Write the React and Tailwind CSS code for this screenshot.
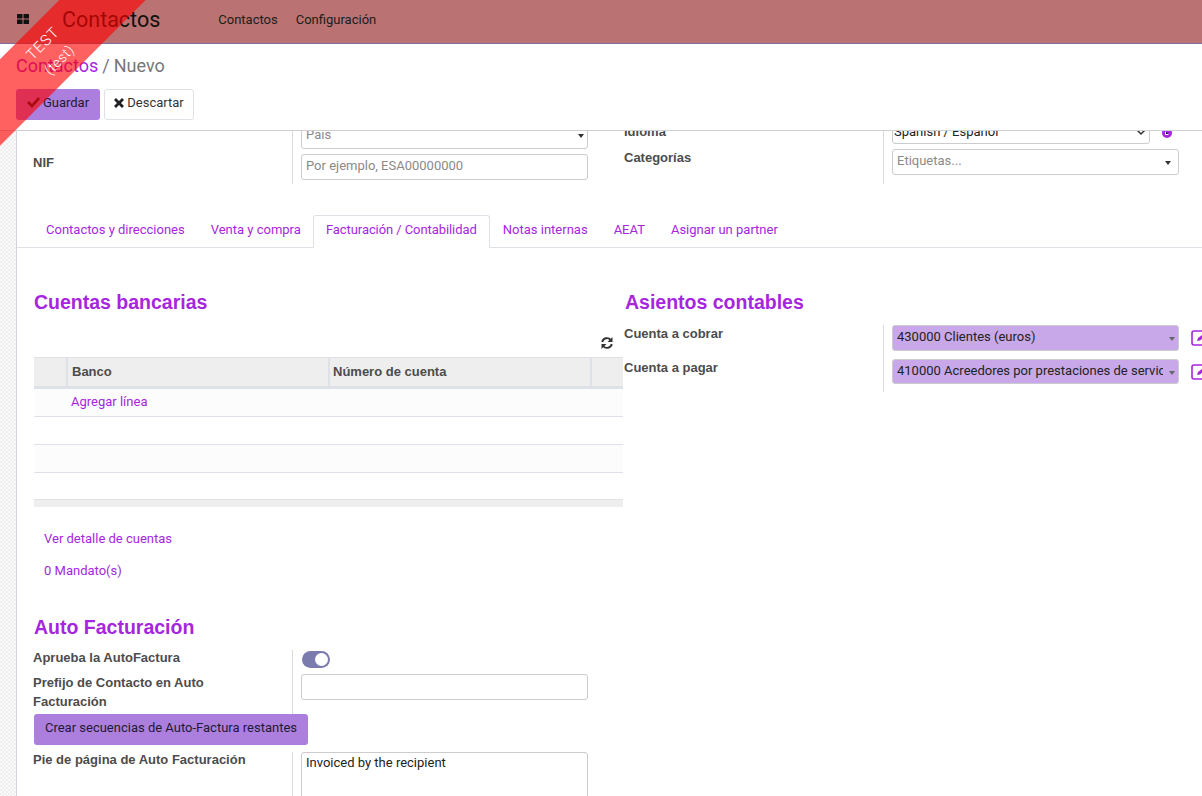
const purple = "text-[#a626e0]";
const bold = "font-['Liberation_Sans',sans-serif] font-bold";

const Caret = ({ className = "right-[7px] border-t-[#333]" }) => (
    <span className={`absolute top-1/2 -mt-[1px] w-0 h-0 border-x-[3px] border-x-transparent border-t-[4px] ${className}`}/>
);

const Label = ({ children, className = "" }) => (
    <div className={`text-[13px] leading-[19px] text-[#4c4c4c] ${bold} ${className}`}>{children}</div>
);

const Edit = () => (
    <svg className="ml-[12px] shrink-0" width="16" height="16" viewBox="0 0 16 16" fill="none">
        <path d="M16 1H3a2 2 0 0 0-2 2v10a2 2 0 0 0 2 2h13" stroke="#a626e0" strokeWidth="1.600"/>
        <path d="M6 11l1-3 4-3 2 2-4 3.500z" fill="#a626e0"/>
    </svg>
);

const App = () => (
    <div className="relative h-[796px] w-[1202px] overflow-hidden bg-white font-['Roboto',sans-serif] text-[13px] text-[#333]">
        <nav className="h-[44px] bg-[#ba7272] border-b border-[#7c6f9f] flex items-center text-[#1c1c1c]">
            <svg className="ml-[17px] mb-[5px]" width="12" height="10" viewBox="0 0 12 10" fill="#111">
                <rect width="5.500" height="4.500" rx="0.500"/>
                <rect x="6.500" width="5.500" height="4.500" rx="0.500"/>
                <rect y="5.500" width="5.500" height="4.500" rx="0.500"/>
                <rect x="6.500" y="5.500" width="5.500" height="4.500" rx="0.500"/>
            </svg>
            <span className="ml-[33px] text-[21.500px] text-[#111] pb-[3px]">Contactos</span>
            <span className="ml-[58px] pb-[4px]">Contactos</span>
            <span className="ml-[18px] pb-[4px]">Configuración</span>
        </nav>
        <header className="h-[87px] px-[16px] border-b border-[#cfcfcf] bg-white">
            <div className="pt-[10px] text-[18px] leading-[24px] text-[#777]">
                <span className={purple}>Contactos</span><span className="mx-[4px]">/</span>Nuevo
            </div>
            <div className="flex gap-[4px] mt-[11px]">
                <button className="h-[31px] w-[84px] pb-[4px] bg-[#ac7fde] rounded-[3px] flex items-center justify-center gap-[3px] text-[#221a33]">
                    <svg width="13" height="11" viewBox="0 0 13 11" fill="#222"><path d="M0 6l2-2 3 3 6-7 2 2-8 9z"/></svg>
                    Guardar
                </button>
                <button className="h-[31px] w-[90px] pb-[4px] bg-white border border-[#dee2e6] rounded-[3px] flex items-center justify-center gap-[3px] text-[#333]">
                    <svg width="10" height="10" viewBox="0 0 10 10" fill="#222"><path d="M0 2l2-2 3 3 3-3 2 2-3 3 3 3-2 2-3-3-3 3-2-2 3-3z"/></svg>
                    Descartar
                </button>
            </div>
        </header>
        <div className="flex h-[665px] overflow-hidden">
            <div className="w-[17px] shrink-0 border-r border-[#d3d3de] bg-[#f4f4f4] bg-[repeating-conic-gradient(#eeeeee_0%_25%,#fafafa_0%_50%)] bg-[length:4px_4px]"/>
            <main className="flex-1 min-w-0 -mt-[11px]">
                <section className="flex h-[64px]">
                    <div className="w-[259px] ml-[16px] shrink-0 pt-[32px]"><Label className="leading-[22px]">NIF</Label></div>
                    <div className="w-[296px] shrink-0 pl-[8px] border-l border-[#d9d9d9] flex flex-col gap-[5px]">
                        <div className="relative h-[29px] w-[287px] border border-[#ccc] rounded-[3px] px-[4px] leading-[27px] text-[#8a8a8a]">País<Caret className="right-[3px] border-t-[#333]"/></div>
                        <div className="h-[26px] w-[287px] border border-[#ccc] rounded-[3px] px-[4px] leading-[21px] text-[#8a8a8a]">Por ejemplo, ESA00000000</div>
                    </div>
                    <div className="w-[259px] shrink-0 ml-[36px] pt-[2px]">
                        <Label>Idioma</Label>
                        <Label className="mt-[7px]">Categorías</Label>
                    </div>
                    <div className="w-[296px] shrink-0 border-l border-[#d9d9d9] pl-[8px] flex flex-col gap-[5px]">
                        <div className="flex items-center h-[24px]">
                            <div className="relative w-[258px] h-[24px] border border-[#ccc] rounded-[3px] pl-[1px] leading-[22px] text-[#222]">
                                Spanish / Español
                                <svg className="absolute right-[3px] top-[8px]" width="10" height="7" viewBox="0 0 10 7" fill="none"><path d="M1 1l4 4 4-4" stroke="#333" strokeWidth="1.500"/></svg>
                            </div>
                            <svg className="ml-[12px] mt-[1px]" width="10" height="10" viewBox="0 0 10 10"><circle cx="5" cy="5" r="5" fill="#a626e0"/><path d="M3.500 3.500v3h3" stroke="#fff" strokeWidth="1"/></svg>
                        </div>
                        <div className="relative h-[26px] w-[287px] border border-[#ccc] rounded-[3px] px-[4px] leading-[22px] text-[#8a8a8a]">Etiquetas...<Caret/></div>
                    </div>
                </section>

                <div className="flex mt-[31px] h-[33px] border-b border-[#dee2e6] pl-[16px]">
                    <span className={`px-[13px] pt-[5px] ${purple}`}>Contactos y direcciones</span>
                    <span className={`px-[13px] pt-[5px] ${purple}`}>Venta y compra</span>
                    <span className={`w-[177px] -ml-[1px] h-[33px] text-center pt-[4px] bg-white border border-b-0 border-[#dee2e6] rounded-t-[3px] whitespace-nowrap tracking-[-0.08px] ${purple}`}>Facturación / Contabilidad</span>
                    <span className={`px-[13px] pt-[5px] ${purple}`}>Notas internas</span>
                    <span className={`px-[13px] pt-[5px] ${purple}`}>AEAT</span>
                    <span className={`px-[13px] pt-[5px] ${purple}`}>Asignar un partner</span>
                </div>

                <div className="flex mt-[40px]">
                    <div className="w-[606px] pl-[17px] shrink-0">
                        <h2 className={`text-[19.500px] leading-[28px] ${bold} ${purple}`}>Cuentas bancarias</h2>
                        <div className="h-[41px] flex items-end justify-end pr-[10px] pb-[8px]">
                            <svg width="12" height="12" viewBox="0 0 12 12" fill="none" stroke="#333" strokeWidth="1.900">
                                <path d="M1.200 5A4.900 4.900 0 0 1 9.800 3"/>
                                <path d="M10.800 7A4.900 4.900 0 0 1 2.200 9"/>
                                <path d="M11.500 0V5H6.500z" fill="#333" stroke="none"/>
                                <path d="M.5 12V7H5.500z" fill="#333" stroke="none"/>
                            </svg>
                        </div>
                        <div className={`flex h-[32px] bg-[#eeeeee] border-t border-b-[3px] border-[#dee2e6] text-[#4c4c4c] ${bold}`}>
                            <div className="w-[34px] border-r-2 border-[#dee2e6]"/>
                            <div className="w-[262px] border-r-2 border-[#dee2e6] pl-[4px] leading-[27px]">Banco</div>
                            <div className="w-[262px] border-r-2 border-[#dee2e6] pl-[3px] leading-[27px]">Número de cuenta</div>
                        </div>
                        <div className={`h-[28px] bg-[#fcfcfc] border-b border-[#e1dfea] pl-[37px] leading-[26px] ${purple}`}>Agregar línea</div>
                        <div className="h-[28px] border-b border-[#e1dfea]"/>
                        <div className="h-[28px] bg-[#fcfcfc] border-b border-[#e1dfea]"/>
                        <div className="h-[26px]"/>
                        <div className="h-[8px] bg-[#eeeeee] border-t border-[#e3e3e3]"/>
                        <div className={`pl-[10px] mt-[24px] leading-[16px] ${purple}`}>Ver detalle de cuentas</div>
                        <div className={`pl-[10px] mt-[16px] leading-[16px] ${purple}`}>0 Mandato(s)</div>
                        <h2 className={`mt-[34px] text-[19.500px] leading-[28px] ${bold} ${purple}`}>Auto Facturación</h2>
                        <div className="flex mt-[9px] -ml-[1px]">
                            <Label className="w-[259px] shrink-0 -mt-[2px]">Aprueba la AutoFactura</Label>
                            <div className="border-l border-[#d9d9d9] pl-[9px] h-[24px] pt-[1px]">
                                <div className="w-[28px] h-[17px] bg-[#7c7bad] rounded-full flex justify-end items-center pr-[2px]">
                                    <span className="w-[13px] h-[13px] rounded-full bg-white"/>
                                </div>
                            </div>
                        </div>
                        <div className="flex -ml-[1px]">
                            <Label className="w-[259px] shrink-0 pr-[16px] -mt-[1px]">Prefijo de Contacto en Auto Facturación</Label>
                            <div className="border-l border-[#d9d9d9] pl-[8px] h-[40px]">
                                <div className="w-[287px] h-[26px] border border-[#ccc] rounded-[3px]"/>
                            </div>
                        </div>
                        <button className="block relative w-[274px] h-[31px] pb-[4px] bg-[#ac7fde] rounded-[3px] text-[#221a33]">Crear secuencias de Auto-Factura restantes</button>
                        <div className="flex mt-[7px] -ml-[1px]">
                            <Label className="w-[259px] shrink-0 -mt-[2px]">Pie de página de Auto Facturación</Label>
                            <div className="border-l border-[#d9d9d9] pl-[8px] h-[60px]">
                                <div className="w-[287px] h-[60px] border border-[#ccc] rounded-[3px] px-[4px] text-[#222]">Invoiced by the recipient</div>
                            </div>
                        </div>
                    </div>
                    <div className="flex-1 min-w-0">
                        <h2 className={`ml-[2px] text-[19.500px] leading-[28px] whitespace-nowrap ${bold} ${purple}`}>Asientos contables</h2>
                        <div className="flex mt-[9px] h-[67px]">
                            <div className="w-[259px] ml-[1px] shrink-0">
                                <Label className="-mt-[1px]">Cuenta a cobrar</Label>
                                <Label className="mt-[15px]">Cuenta a pagar</Label>
                            </div>
                            <div className="w-[320px] shrink-0 border-l border-[#d9d9d9] pl-[8px] flex flex-col gap-[8px]">
                                <div className="flex items-center">
                                    <div className="relative w-[287px] shrink-0 h-[26px] bg-[#c8a8e9] border border-[#ccc] rounded-[3px] pl-[4px] pr-[14px] leading-[21px] text-[#222] whitespace-nowrap overflow-hidden">430000 Clientes (euros)<Caret className="right-[3px] border-t-[#666]"/></div>
                                    <Edit/>
                                </div>
                                <div className="flex items-center">
                                    <div className="relative w-[287px] shrink-0 h-[25px] bg-[#c8a8e9] border border-[#ccc] rounded-[3px] pl-[4px] leading-[21px] text-[#222]">
                                        <div className="w-[266px] whitespace-nowrap overflow-hidden">410000 Acreedores por prestaciones de servicios</div>
                                        <Caret className="right-[3px] border-t-[#666]"/>
                                    </div>
                                    <Edit/>
                                </div>
                            </div>
                        </div>
                    </div>
                </div>
            </main>
        </div>
        {/* ribbon */}
        <div className="absolute top-[21px] -left-[74px] w-[250px] h-[61px] -rotate-45 bg-[#ff0000]/[0.62] flex flex-col items-center justify-center text-white pointer-events-none">
            <span className="text-[15px] leading-[23px] tracking-[1px] font-light">TEST</span>
            <span className="text-[14px] leading-[23px] tracking-[0.5px] font-light">(test)</span>
        </div>
    </div>
);

export default App;
